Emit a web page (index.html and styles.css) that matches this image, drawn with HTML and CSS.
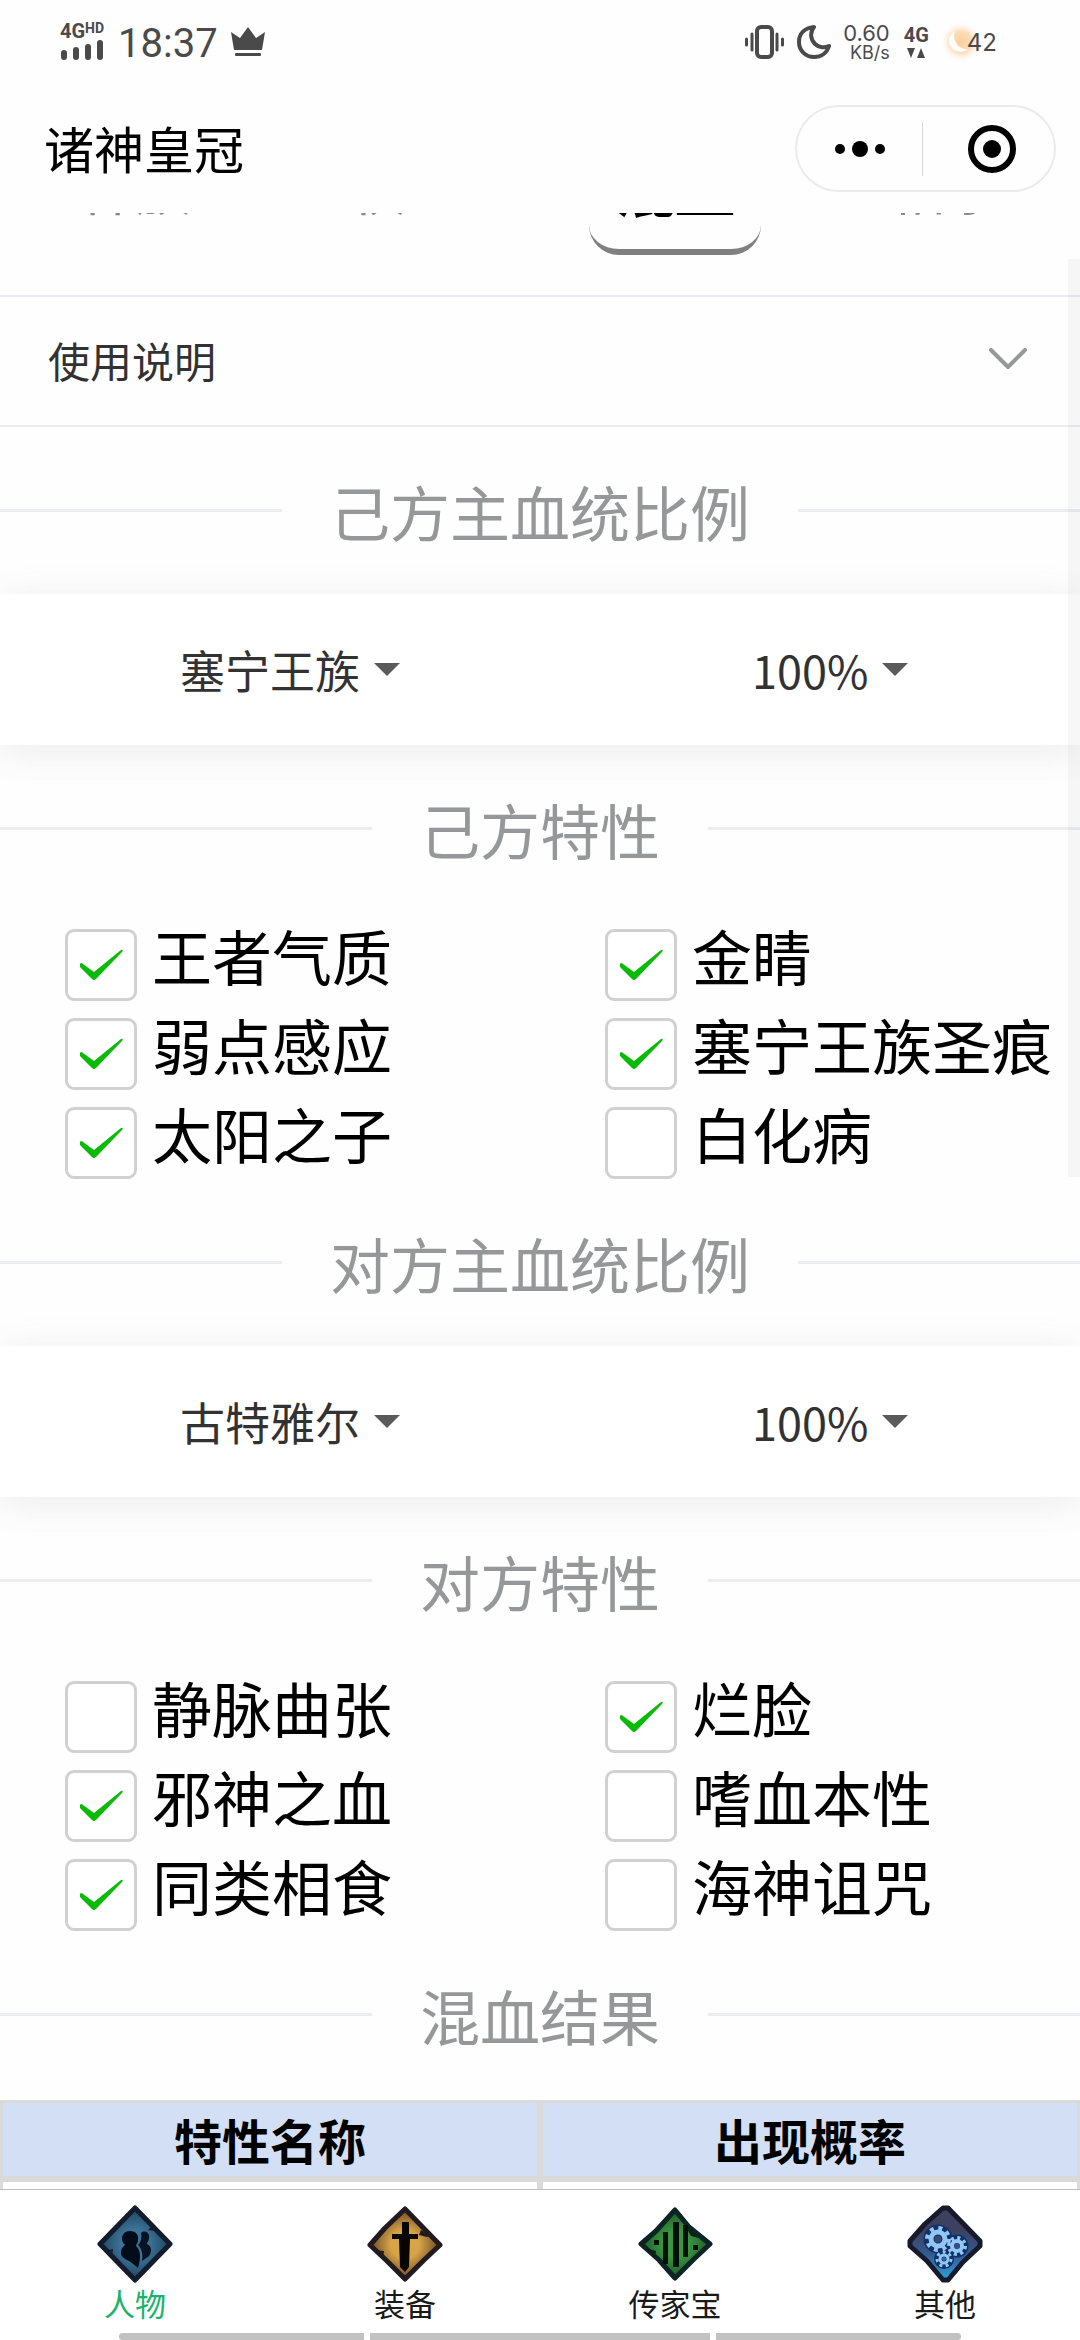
FILE: index.html
```html
<!DOCTYPE html>
<html lang="zh-CN">
<head>
	<meta charset="UTF-8">
	<title>诸神皇冠</title>
	<meta name="viewport" content="width=device-width,initial-scale=1">
	<link rel="stylesheet" href="styles.css">
</head>
<body>
	<header class="status">
		<div class="network">
			<div class="network-name">4G<small>HD</small></div>
			<svg width="44" height="22" viewBox="0 0 44 22" stroke="#4a4a4a" stroke-width="6" stroke-linecap="round">
				<path d="M4 14v4M16 11v7M28 8v10M40 4v14"/>
			</svg>
		</div>
		<span class="time">18:37</span>
		<svg class="crown" width="34" height="30" viewBox="0 0 34 30" fill="#4a4a4a">
			<path d="M0 5l9 6 8-11 8 11 9-6-3 18H3z"/>
			<rect x="4" y="26" width="26" height="3" rx="1"/>
		</svg>
		<div class="status-right">
			<svg width="40" height="34" viewBox="0 0 40 34" fill="none" stroke="#4a4a4a" stroke-linecap="round">
				<rect x="12" y="2" width="15" height="30" rx="4" stroke-width="4"/>
				<path d="M1.500 14v6M7 9v16M32 9v16M37.500 14v6" stroke-width="3"/>
			</svg>
			<svg class="moon" width="34" height="34" viewBox="0 0 34 34" fill="none" stroke="#4a4a4a" stroke-width="4" stroke-linejoin="round">
				<path d="M17 2C7 3 2 9 2 17c0 9 7 15 15 15 7 0 13-4 15-11-4 2-10 2-14-2-5-5-5-12-1-17z"/>
			</svg>
			<div class="speed">0.60<small>KB/s</small></div>
			<div class="data">4G
				<svg width="18" height="10" viewBox="0 0 18 10" fill="#4a4a4a"><path d="M0 0h8L4 10zM10 10h8L14 0z"/></svg>
			</div>
			<div class="battery">
				<svg width="36" height="42" viewBox="0 0 36 42">
					<defs>
						<radialGradient id="glow">
							<stop offset="0" stop-color="#fbcf9d"/>
							<stop offset=".5" stop-color="#fddcb8"/>
							<stop offset="1" stop-color="#fff" stop-opacity="0"/>
						</radialGradient>
					</defs>
					<circle cx="20" cy="21" r="21" fill="url(#glow)"/>
					<path d="M14 10c-6 4-8 11-4 16 4 6 12 6 17 2-6 0-10-2-12-6-2-4-3-8-1-12z" fill="#fff"/>
				</svg>
				<span>42</span>
			</div>
		</div>
	</header>

	<div class="navbar">
		<h1>诸神皇冠</h1>
		<div class="capsule">
			<button type="button" aria-label="更多">
				<svg width="52" height="18" viewBox="0 0 52 18"><circle cx="6" cy="9" r="5"/><circle cx="26" cy="9" r="8"/><circle cx="46" cy="9" r="5"/></svg>
			</button>
			<button type="button" aria-label="关闭">
				<svg width="48" height="48" viewBox="0 0 48 48"><circle cx="24" cy="24" r="21" fill="none" stroke="#000" stroke-width="6"/><circle cx="24" cy="24" r="9"/></svg>
			</button>
		</div>
	</div>

	<main>
		<div class="tabs">
			<button type="button">种族</button>
			<button type="button">秋血</button>
			<button type="button" class="active">混血</button>
			<button type="button">相亲</button>
		</div>

		<button type="button" class="collapse">
			<span>使用说明</span>
			<svg width="38" height="22" viewBox="0 0 38 22" fill="none" stroke="#969799" stroke-width="4" stroke-linecap="round" stroke-linejoin="round"><path d="M2 2l17 17L36 2"/></svg>
		</button>

		<h2 class="divider">己方主血统比例</h2>
		<div class="dropdown">
			<label><select aria-label="己方主血统"><option>塞宁王族</option></select></label>
			<label><select aria-label="己方比例"><option>100%</option></select></label>
		</div>

		<h2 class="divider">己方特性</h2>
		<div class="traits">
			<label><input type="checkbox" checked><span>王者气质</span></label>
			<label><input type="checkbox" checked><span>金睛</span></label>
			<label><input type="checkbox" checked><span>弱点感应</span></label>
			<label><input type="checkbox" checked><span>塞宁王族圣痕</span></label>
			<label><input type="checkbox" checked><span>太阳之子</span></label>
			<label><input type="checkbox"><span>白化病</span></label>
		</div>

		<h2 class="divider">对方主血统比例</h2>
		<div class="dropdown">
			<label><select aria-label="对方主血统"><option>古特雅尔</option></select></label>
			<label><select aria-label="对方比例"><option>100%</option></select></label>
		</div>

		<h2 class="divider">对方特性</h2>
		<div class="traits">
			<label><input type="checkbox"><span>静脉曲张</span></label>
			<label><input type="checkbox" checked><span>烂脸</span></label>
			<label><input type="checkbox" checked><span>邪神之血</span></label>
			<label><input type="checkbox"><span>嗜血本性</span></label>
			<label><input type="checkbox" checked><span>同类相食</span></label>
			<label><input type="checkbox"><span>海神诅咒</span></label>
		</div>

		<h2 class="divider">混血结果</h2>
		<table>
			<thead>
				<tr><th>特性名称</th><th>出现概率</th></tr>
			</thead>
			<tbody>
				<tr><td></td><td></td></tr>
			</tbody>
		</table>
		<div class="scrollbar"></div>
	</main>

	<nav class="tabbar">
		<a href="#" class="active">
			<svg width="76" height="78" viewBox="0 0 76 78">
				<defs>
					<radialGradient id="blue"><stop offset=".4" stop-color="#3c7396"/><stop offset="1" stop-color="#1d4561"/></radialGradient>
				</defs>
				<path d="M38 3l35 36-35 36L3 39z" fill="url(#blue)" stroke="#131b2c" stroke-width="5" stroke-linejoin="round"/>
				<path d="M51 25l9 1-4-6zM16 44l-1 9-6-7z" fill="#131b2c"/>
				<path d="M44 28c3-3 9-1 8 5 0 3-2 4-2 6 5 2 5 8 2 12l-7 5c1-7 0-12-4-16 3-3 4-8 3-12z" fill="#071225"/>
				<path d="M33 26c6 0 9 4 8 9 0 3-2 4-2 6 5 4 5 12 2 22-3-3-6-5-9-7-4-2-8-4-8-8 0-5 2-6 4-8-2-2-3-4-3-6 0-5 3-8 8-8z" fill="#030c19"/>
			</svg>
			<span>人物</span>
		</a>
		<a href="#">
			<svg width="76" height="78" viewBox="0 0 76 78">
				<defs>
					<radialGradient id="gold"><stop offset=".4" stop-color="#d7a548"/><stop offset="1" stop-color="#6d4725"/></radialGradient>
				</defs>
				<path d="M38 4l35 36-16 15-19 19-18-18L3 40l15-17z" fill="url(#gold)" stroke="#211b20" stroke-width="5" stroke-linejoin="round"/>
				<path d="M54 25l10 6-4 1-8-2zM8 45l9 1-1 7z" fill="#211b20"/>
				<path d="M35 17h7v12h9v5h-8l-1 28-4 5-5-5-1-28h-7v-5h10z" fill="#080604"/>
			</svg>
			<span>装备</span>
		</a>
		<a href="#">
			<svg width="76" height="78" viewBox="0 0 76 78">
				<defs>
					<radialGradient id="green"><stop offset=".4" stop-color="#3a9440"/><stop offset="1" stop-color="#1c5a29"/></radialGradient>
				</defs>
				<path d="M38 5l14 17 21 17-16 15-19 19-16-18L4 39l15-13z" fill="url(#green)" stroke="#0d2425" stroke-width="5" stroke-linejoin="round"/>
				<path d="M49 22l13 11-8-2zM9 43l10 3-1 7z" fill="#0a2014"/>
				<path d="M36 17h6v45h-6zM26 27h5v32h-5zM46 20h5v32h-5zM17 35h5v5h-5zM56 40h5v5h-5z" fill="#031007"/>
			</svg>
			<span>传家宝</span>
		</a>
		<a href="#">
			<svg width="76" height="78" viewBox="0 0 76 78">
				<defs>
					<linearGradient id="sky" x1="0" y1="0" x2="0" y2="1"><stop offset=".3" stop-color="#3d405f"/><stop offset=".65" stop-color="#345b91"/><stop offset="1" stop-color="#29a3e2"/></linearGradient>
				</defs>
				<path d="M36 3h5l32 33v5L56 57 41 75h-5L20 56 3 41v-5l15-17z" fill="url(#sky)" stroke="#171a2b" stroke-width="5" stroke-linejoin="round"/>
				<g fill="none" stroke="#123167">
					<circle cx="31" cy="34" r="9" stroke-width="11"/>
					<circle cx="50" cy="41" r="7" stroke-width="9"/>
					<circle cx="37" cy="54" r="6" stroke-width="8"/>
				</g>
				<g fill="none" stroke="#91c6f5">
					<circle cx="31" cy="34" r="7" stroke-width="5"/>
					<circle cx="31" cy="34" r="11" stroke-width="4" stroke-dasharray="4 4.640"/>
					<circle cx="50" cy="41" r="5" stroke-width="4"/>
					<circle cx="50" cy="41" r="8" stroke-width="4" stroke-dasharray="3 3.280"/>
					<circle cx="37" cy="54" r="4" stroke-width="3"/>
					<circle cx="37" cy="54" r="7" stroke-width="3" stroke-dasharray="3 3.280"/>
				</g>
			</svg>
			<span>其他</span>
		</a>
	</nav>
	<div class="gesture"><i></i><i></i><i></i></div>
</body>
</html>
```
FILE: styles.css
```css
* {
	box-sizing: border-box;
}
html,
body {
	margin: 0;
	padding: 0;
	height: 100%;
}
body {
	display: flex;
	flex-direction: column;
	overflow: hidden;
	background: #fefefe;
	color: #000;
	font-family: "Noto Sans CJK SC", sans-serif;
}
button,
select {
	border: 0;
	padding: 0;
	background: none;
	color: inherit;
	font: inherit;
}
svg {
	display: block;
	flex: none;
}

/* status bar */
.status {
	display: flex;
	align-items: center;
	height: 84px;
	padding: 0 83px 0 60px;
	color: #4a4a4a;
	font-family: Inter, sans-serif;
}
.network-name {
	display: flex;
	font: bold 20px/16px Roboto, sans-serif;
}
.network-name small {
	font-size: 14px;
	line-height: 10px;
}
.time {
	margin: 4px 13px 0 14px;
	font: 40px/48px Roboto, sans-serif;
}
.status-right {
	display: flex;
	align-items: center;
	margin-left: auto;
}
.moon {
	margin: 0 12px;
}
.speed {
	font-size: 22px;
	line-height: 22px;
	text-align: right;
}
.speed small {
	display: block;
	font-size: 18px;
	line-height: 18px;
}
.data {
	display: flex;
	flex-direction: column;
	align-items: center;
	gap: 4px;
	margin: 0 12px 0 14px;
	font: bold 20px/18px Roboto, sans-serif;
}
.battery {
	display: flex;
	align-items: center;
	font-size: 24px;
}
.battery span {
	margin-left: -10px;
}

.navbar {
	display: flex;
	align-items: center;
	justify-content: space-between;
	height: 129px;
	padding: 0 24px 0 44px;
}
.navbar h1 {
	margin: 0;
	padding-bottom: 4px;
	font-size: 50px;
	font-weight: normal;
	line-height: 60px;
}
.capsule {
	display: flex;
	align-items: center;
	width: 261px;
	height: 87px;
	border: 2px solid #ebebeb;
	border-radius: 44px;
}
.capsule button {
	display: flex;
	flex: 1;
	align-items: center;
	justify-content: center;
	height: 54px;
}
.capsule button + button {
	padding-left: 6px;
	border-left: 1px solid #d8d8d8;
}

main {
	position: relative;
	flex: 1;
	min-height: 0;
	overflow: hidden;
}
/* the list is scrolled, only the lower edge of the tabs is left */
.tabs {
	display: grid;
	grid-template-columns: repeat(4, 1fr);
	justify-items: center;
	margin-top: -68px;
	padding-bottom: 40px;
}
.tabs button {
	width: 172px;
	height: 110px;
	padding-bottom: 22px;
	border-bottom: 6px solid transparent;
	border-radius: 30px;
	color: #888;
	font-size: 56px;
	line-height: 60px;
}
.tabs .active {
	border-color: #808080;
	color: #000;
	font-size: 60px;
	font-weight: bold;
}

.collapse {
	display: flex;
	align-items: center;
	justify-content: space-between;
	width: 100%;
	height: 132px;
	padding: 0 53px 4px 48px;
	border: solid #ebedf0;
	border-width: 2px 0;
	color: #323233;
	font-size: 42px;
}

.divider {
	display: flex;
	align-items: center;
	gap: 48px;
	height: 167px;
	margin: 0;
	color: #969799;
	font-size: 60px;
	font-weight: normal;
}
.divider::before,
.divider::after {
	content: "";
	flex: 1;
	border-top: 3px solid #ebedf0;
}

.dropdown {
	position: relative;
	z-index: -1;
	display: grid;
	grid-template-columns: 1fr 1fr;
	height: 151px;
	background: #fff;
	box-shadow: 0 6px 36px rgba(100, 101, 102, .12);
	color: #323233;
	font-size: 45px;
}
.dropdown label {
	display: flex;
	align-items: center;
	justify-content: center;
	padding-left: 40px;
}
.dropdown select {
	appearance: none;
}
.dropdown label::after {
	content: "";
	margin-left: 13px;
	border: solid transparent;
	border-width: 13px 13px 0;
	border-top-color: #5a5a5b;
}

.traits {
	display: grid;
	grid-template-columns: 1fr 1fr;
}
.traits label {
	display: flex;
	align-items: flex-end;
	gap: 15px;
	height: 89px;
	padding-left: 65px;
	font-size: 60px;
	white-space: nowrap;
}
.traits span {
	line-height: 92px;
}
.traits input {
	appearance: none;
	flex: none;
	width: 72px;
	height: 72px;
	margin: 0;
	border: 3px solid #d1d1d1;
	border-radius: 9px;
	background: #fff;
}
.traits input:checked {
	background: #fff url("data:image/svg+xml,%3Csvg xmlns='http://www.w3.org/2000/svg' viewBox='0 0 44 32'%3E%3Cpath d='M1 15Q2 13 4 15L15 23 42 1Q45 0 43 3L17 30Q15 32 13 30L1 18z' fill='%2309bb07'/%3E%3C/svg%3E") center / 44px 32px no-repeat;
}

table {
	width: 100%;
	margin-top: 2px;
	border-collapse: collapse;
	table-layout: fixed;
}
th,
td {
	height: 77px;
	padding: 0;
	border: 6px solid #dadada;
}
th {
	border-top-width: 3px;
	background: #d3dff5;
	font-size: 48px;
	line-height: 71px;
}
td {
	background: #fff;
}
tr > :first-child {
	border-left-width: 3px;
}
tr > :last-child {
	border-right-width: 3px;
}

.scrollbar {
	position: absolute;
	top: 46px;
	right: 0;
	width: 12px;
	height: 918px;
	background: rgba(0, 0, 0, .03);
}

.tabbar {
	display: grid;
	grid-template-columns: repeat(4, 1fr);
	padding-top: 15px;
	border-top: 1px solid #bfbfbf;
	background: #fff;
}
.tabbar a {
	display: flex;
	flex-direction: column;
	align-items: center;
	color: #1a1a1a;
	font-size: 31px;
	line-height: 40px;
	text-decoration: none;
}
.tabbar .active {
	color: #1bb36a;
}

.gesture {
	display: grid;
	grid-template-columns: 244fr 338fr 244fr;
	gap: 6px;
	padding: 10px 11% 0;
	background: #fff;
}
.gesture i {
	height: 7px;
	background: #c2c2c2;
}
.gesture i:first-child {
	border-radius: 4px 0 0 4px;
}
.gesture i:last-child {
	border-radius: 0 4px 4px 0;
}
```
